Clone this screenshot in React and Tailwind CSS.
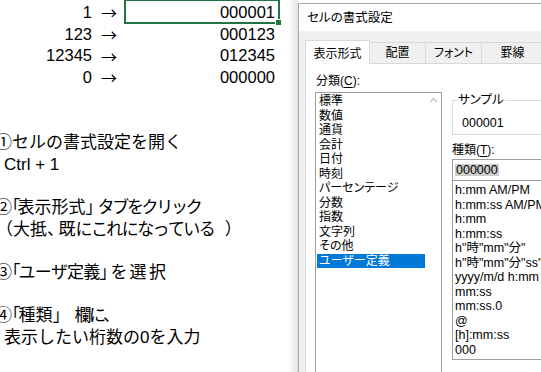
import React from "react";

const sheetRows = [
  { n: "1", v: "000001" },
  { n: "123", v: "000123" },
  { n: "12345", v: "012345" },
  { n: "0", v: "000000" },
];

const categories = [
  "標準",
  "数値",
  "通貨",
  "会計",
  "日付",
  "時刻",
  "パーセンテージ",
  "分数",
  "指数",
  "文字列",
  "その他",
  "ユーザー定義",
];

const formats = [
  "h:mm AM/PM",
  "h:mm:ss AM/PM",
  "h:mm",
  "h:mm:ss",
  'h"時"mm"分"',
  'h"時"mm"分"ss"秒"',
  "yyyy/m/d h:mm",
  "mm:ss",
  "mm:ss.0",
  "@",
  "[h]:mm:ss",
  "000",
];

function Row({ children }) {
  return <div className="flex h-[21.7px] items-center text-[17px] whitespace-nowrap">{children}</div>;
}

function Chars({ text, cls }) {
  return Array.from(text).map((c, i) => (
    <span key={i} className={cls}>
      {c}
    </span>
  ));
}

export default function App() {
  return (
    <div className="relative w-[541px] h-[372px] overflow-hidden bg-white text-black font-['Liberation_Sans','Noto_Sans_CJK_JP',sans-serif]">
      {/* spreadsheet content */}
      <div className="flex flex-col pt-[1.5px] text-[16.5px] leading-none">
        {sheetRows.map((r) => (
          <div key={r.n} className="flex h-[21.7px] items-center">
            <span className="w-[92px] text-right">{r.n}</span>
            <span className="ml-[9px] w-[17px] font-['Noto_Sans_CJK_JP',sans-serif] text-[16px]">→</span>
            <span className="w-[157px] text-right">{r.v}</span>
          </div>
        ))}
        <Row />
        <Row />
        <Row>
          <span className="-ml-[5px]">①セルの書式設定を開く</span>
        </Row>
        <Row>
          <span className="ml-[4px]">Ctrl + 1</span>
        </Row>
        <Row />
        <Row>
          <span className="-ml-[5px] flex">
            <span>②</span>
            <span className="-ml-[8.5px] -mr-[3px]">「</span>
            <span>表示形式</span>
            <span className="-mr-[5px]">」</span>
            <Chars text="タブをクリック" cls="-mr-[2.3px]" />
          </span>
        </Row>
        <Row>
          <span className="-ml-[4px] flex">
            <span>（大抵</span>
            <span className="-mr-[5.5px]">、</span>
            <span>既</span>
            <Chars text="にこれになってい" cls="-mr-[1.6px]" />
            <span>る</span>
            <span className="ml-[9px]">）</span>
          </span>
        </Row>
        <Row />
        <Row>
          <span className="-ml-[5px] flex">
            <span>③</span>
            <span className="-ml-[8.5px] -mr-[2px]">「</span>
            <Chars text="ユーザ定義" cls="-mr-[0.8px]" />
            <span className="-mr-[6px]">」</span>
            <span className="mr-[2px]">を</span>
            <span className="mr-[2.5px]">選</span>
            <span>択</span>
          </span>
        </Row>
        <Row />
        <Row>
          <span className="-ml-[5px] flex">
            <span>④</span>
            <span className="-ml-[8.5px] -mr-[2px]">「</span>
            <span>種類</span>
            <span className="mr-[5px]">」</span>
            <span className="-mr-[2.5px]">欄</span>
            <span className="-mr-[3px]">に</span>
            <span>、</span>
          </span>
        </Row>
        <Row>
          <span className="ml-[4px]">表示したい桁数の0を入力</span>
        </Row>
      </div>

      {/* active cell selection */}
      <div className="absolute left-[124px] top-[-1px] w-[156px] h-[25px] border-2 border-[#217346]" />
      <div className="absolute left-[275px] top-[19px] w-[7px] h-[7px] bg-[#217346] border border-white" />

      {/* dialog shadow */}
      <div className="absolute left-[288px] top-0 w-[10px] h-full bg-gradient-to-r from-[#ffffff] to-[#e4e4e4]" />

      {/* dialog window */}
      <div className="absolute left-[298px] top-[3px] w-[280px] h-[400px] border border-[#a8a8a8] bg-[#f0f0f0] flex flex-col text-[12px] leading-none [font-feature-settings:'palt']">
        <div className="h-[27px] bg-white flex items-center pl-[8px] pt-[1px] text-[12.5px]">セルの書式設定</div>
        <div className="flex flex-col pl-[6px] flex-1">
          {/* tabs */}
          <div className="h-[32px] flex items-end">
            <div className="w-[65px] h-[24px] bg-white border border-b-0 border-[#d9d9d9] flex items-center justify-center pt-[2px] -mb-px relative z-10">
              表示形式
            </div>
            <div className="w-[56px] h-[21px] border border-l-0 border-b-0 border-[#d9d9d9] flex items-center justify-center">
              配置
            </div>
            <div className="w-[56px] h-[21px] border border-l-0 border-b-0 border-[#d9d9d9] flex items-center justify-center">
              フォント
            </div>
            <div className="w-[62px] h-[21px] border border-l-0 border-b-0 border-[#d9d9d9] flex items-center justify-center">
              罫線
            </div>
          </div>
          {/* panel */}
          <div className="flex-1 bg-white border-t border-l border-[#d9d9d9] flex pl-[9px]">
            {/* categories */}
            <div className="w-[127px] flex flex-col">
              <div className="mt-[9px] h-[16px] flex items-center pl-px">
                分類(<span className="underline underline-offset-2">C</span>):
              </div>
              <div className="mt-[3px] h-[300px] border border-[#a0a0a0] flex">
                <div className="flex-1 flex flex-col pt-px pl-px">
                  {categories.map((c) => (
                    <div
                      key={c}
                      className={
                        "h-[14.5px] flex items-center pl-[2px] " +
                        (c === "ユーザー定義" ? "bg-[#0078d7] text-white" : "")
                      }
                    >
                      {c}
                    </div>
                  ))}
                </div>
                <div className="w-[16px] flex flex-col items-center pt-[4px]">
                  <svg width="9" height="6" viewBox="0 0 9 6">
                    <path d="M1 5 L4.5 1.5 L8 5" fill="none" stroke="#c2c2c2" strokeWidth="1.3" />
                  </svg>
                </div>
              </div>
            </div>
            {/* right side */}
            <div className="ml-[10px] flex-1 flex flex-col">
              <div className="relative mt-[36px] h-[35px] border border-[#dcdcdc]">
                <div className="absolute left-[4px] top-[-8px] bg-white px-px leading-[14px] text-[12.5px]">サンプル</div>
                <div className="absolute left-[9px] top-[16px] text-[12.5px] font-['Liberation_Sans',sans-serif]">000001</div>
              </div>
              <div className="mt-[8px] h-[14px] flex items-center">
                種類(<span className="underline underline-offset-2">T</span>):
              </div>
              <div className="mt-[2px] h-[21px] border border-b-0 border-[#a0a0a0] flex items-center pl-[2px]">
                <span className="bg-[#cccccc] px-px h-[12px] flex items-center text-[12.5px] font-['Liberation_Sans',sans-serif]">000000</span>
              </div>
              <div className="h-[180px] border border-[#a0a0a0] flex flex-col pt-[2px] pl-[2px] text-[12.5px] font-['Liberation_Sans','Noto_Sans_CJK_JP',sans-serif] whitespace-nowrap">
                {formats.map((f) => (
                  <div key={f} className="h-[14.5px] flex items-center">
                    {f}
                  </div>
                ))}
              </div>
            </div>
          </div>
        </div>
      </div>
    </div>
  );
}
